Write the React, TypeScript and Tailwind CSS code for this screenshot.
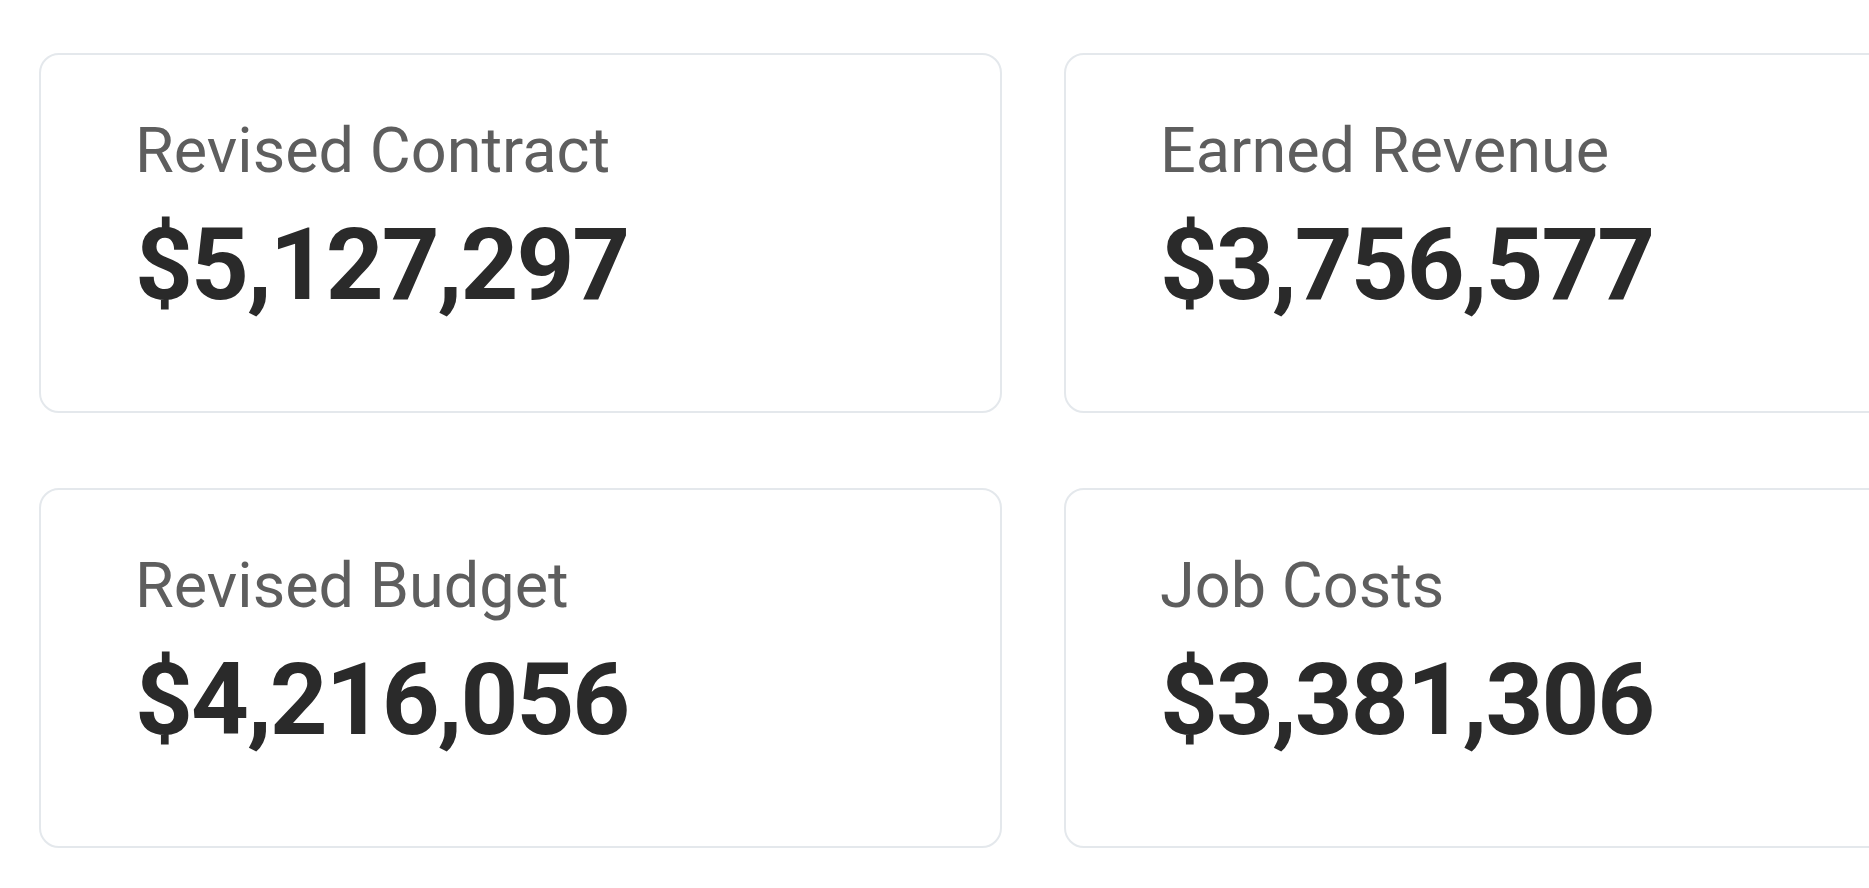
const stats = [
  { label: "Revised Contract", value: "$5,127,297" },
  { label: "Earned Revenue", value: "$3,756,577" },
  { label: "Revised Budget", value: "$4,216,056" },
  { label: "Job Costs", value: "$3,381,306" },
];

function StatCard({ label, value }: { label: string; value: string }) {
  return (
    <div className="h-[360px] rounded-[20px] border-2 border-[#e4e8ec] bg-white pl-[94px] pt-[59px]">
      <p className="text-[63px] leading-[74px] text-[#5e5e5e] whitespace-nowrap">
        {label}
      </p>
      <p className="mt-[18px] text-[101px] leading-[118px] font-bold tracking-[-2px] text-[#2a2a2a] whitespace-nowrap">
        {value}
      </p>
    </div>
  );
}

export default function App() {
  return (
    <main
      className="h-screen w-screen overflow-hidden bg-white"
      style={{ fontFamily: "Roboto, 'Liberation Sans', sans-serif" }}
    >
      <div className="grid w-[2100px] grid-cols-[963px_963px] gap-x-[62px] gap-y-[75px] pl-[39px] pt-[53px]">
        {stats.map((s) => (
          <StatCard key={s.label} label={s.label} value={s.value} />
        ))}
      </div>
    </main>
  );
}
